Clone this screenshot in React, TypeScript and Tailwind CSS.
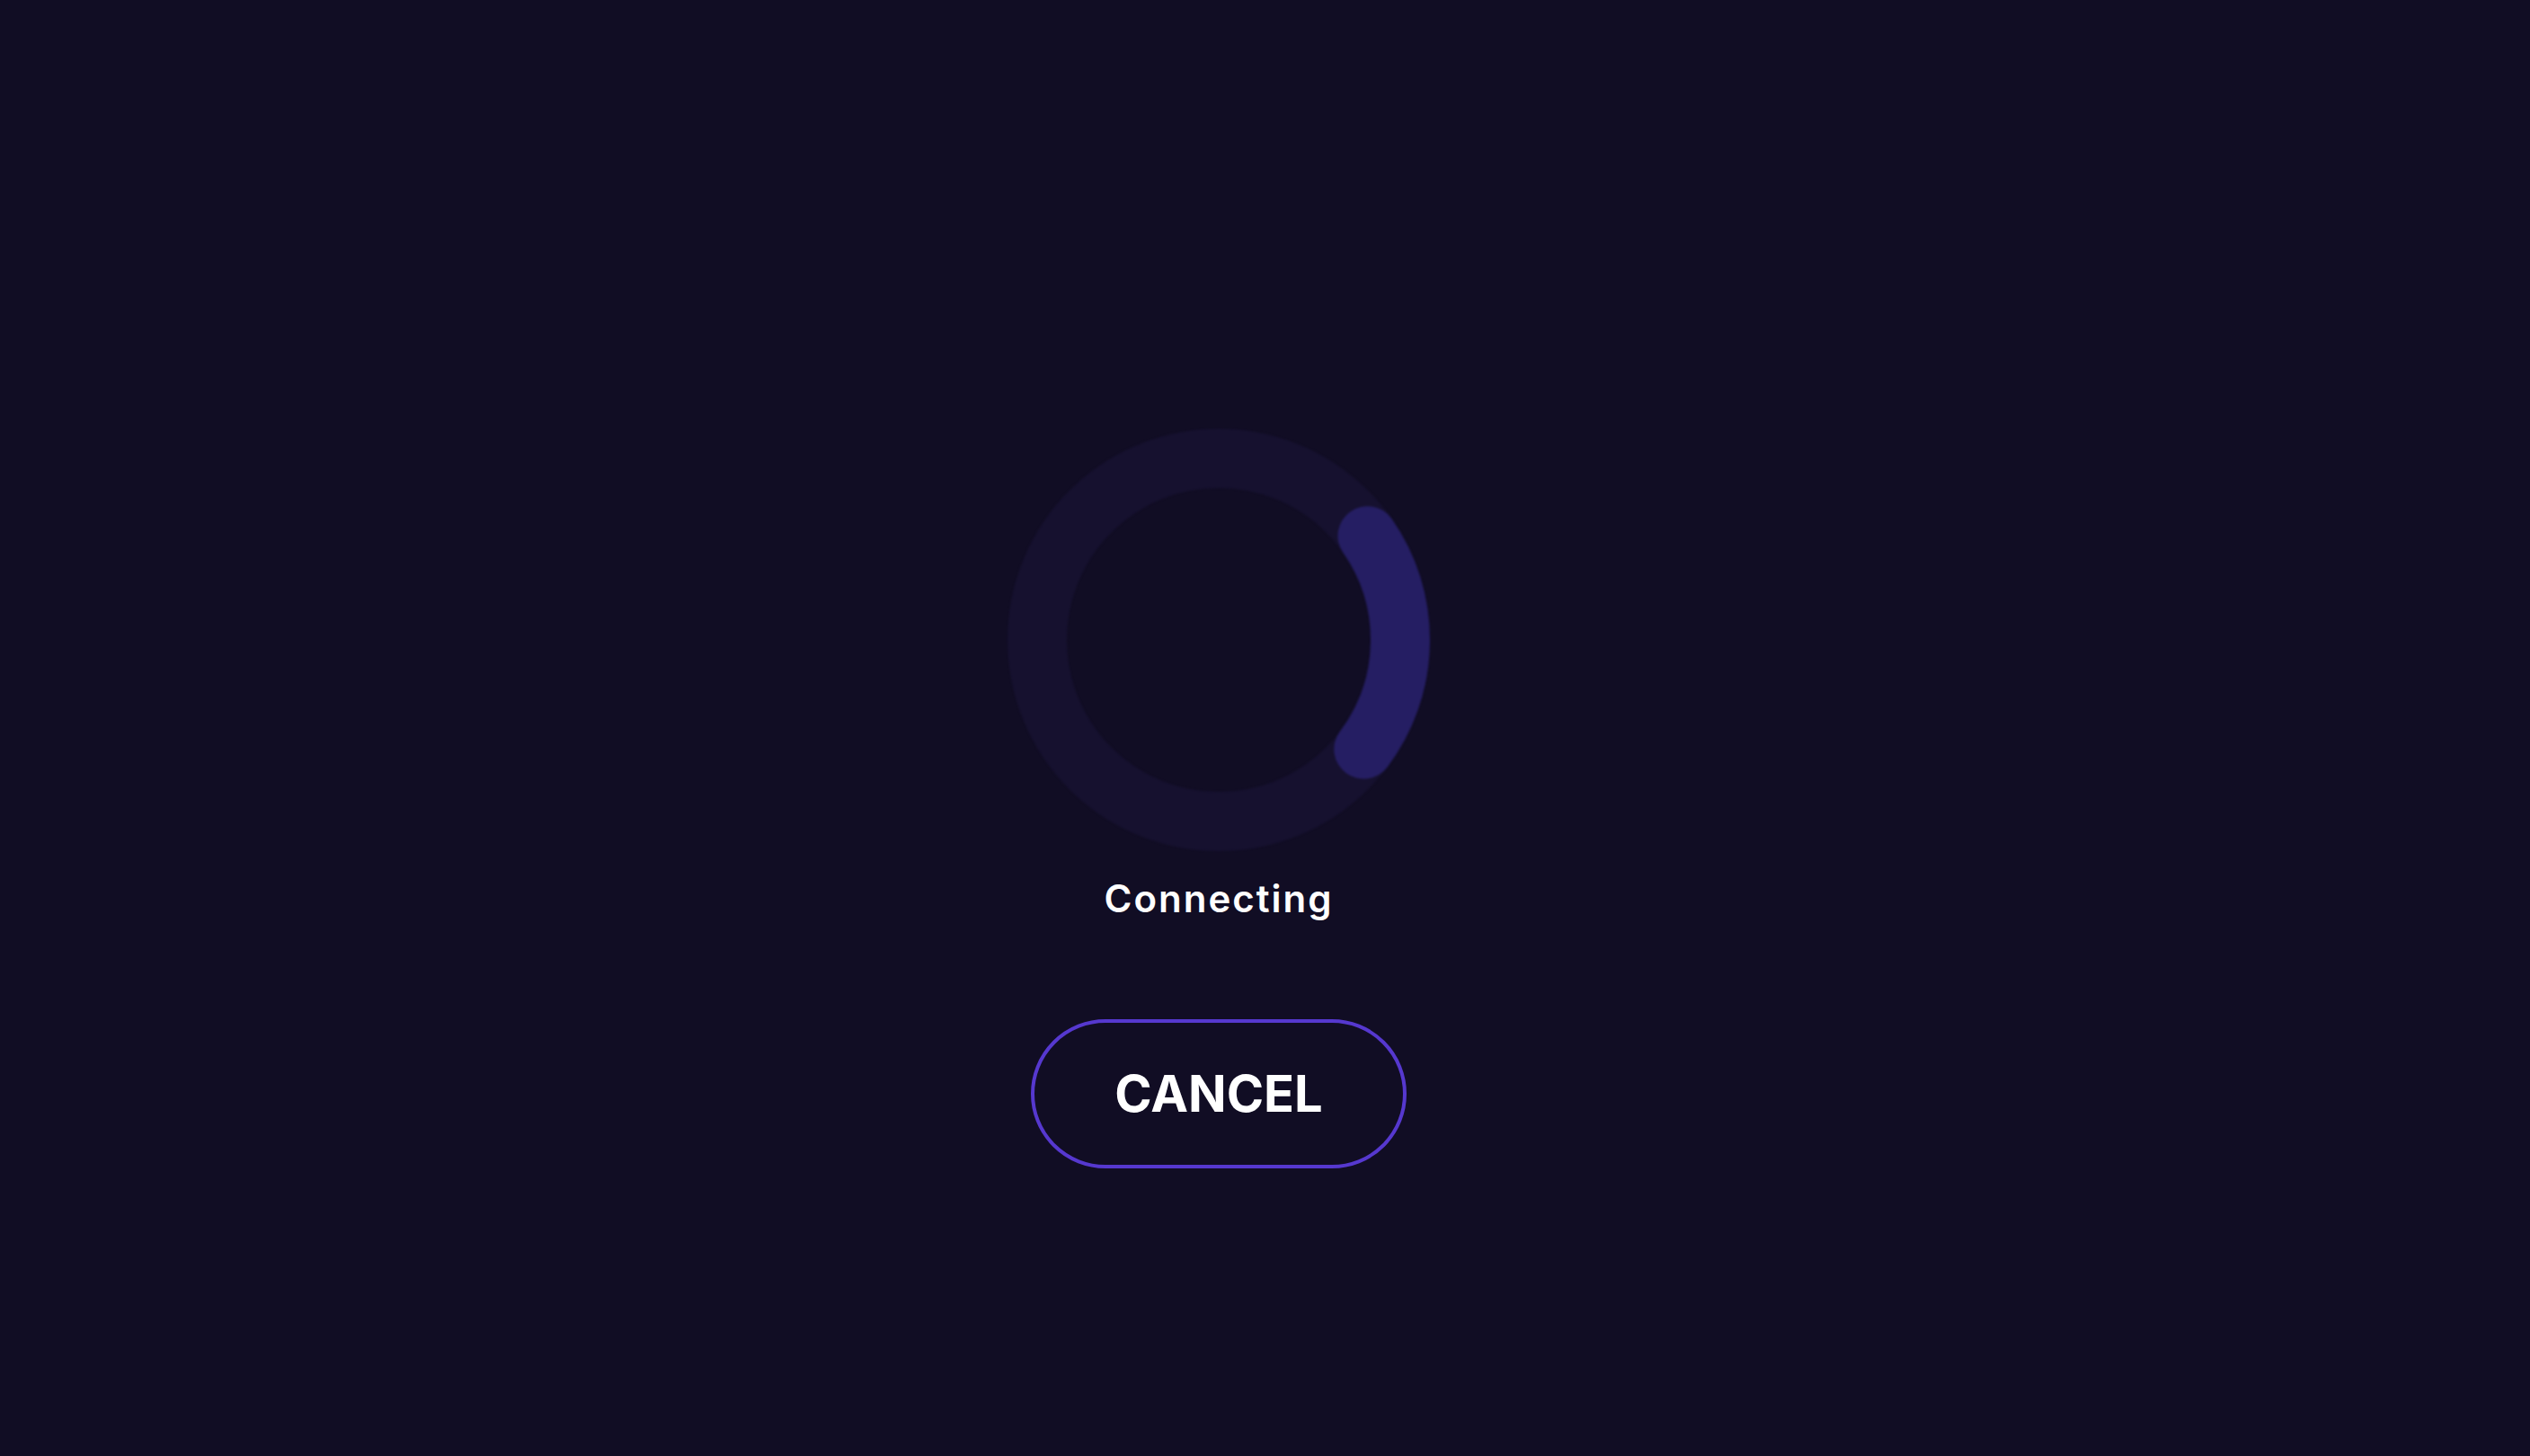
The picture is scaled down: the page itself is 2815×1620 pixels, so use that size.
const Spinner = () => (
  <svg width="470" height="470" viewBox="0 0 470 470" className="blur-[1px]">
    <circle cx="235" cy="235" r="202" fill="none" stroke="#16112f" strokeWidth="66" />
    <path
      d="M 400.5 119.2 A 202 202 0 0 1 396.3 356.6"
      fill="none"
      stroke="#251e63"
      strokeWidth="66"
      strokeLinecap="round"
    />
  </svg>
);

export default function App() {
  return (
    <div
      className="flex h-[1620px] w-full flex-col items-center overflow-hidden bg-[#110d24] pr-[103px] pt-[477px] text-white"
      style={{ fontFamily: 'Inter, "Noto Sans", sans-serif' }}
    >
      <Spinner />
      <div className="mt-[28px] text-[42px] font-semibold leading-[50px] tracking-[2px]">
        Connecting
      </div>
      <button
        type="button"
        className="mt-[109px] flex h-[166px] w-[418px] items-center justify-center rounded-full border-[4px] border-[#5638cf] bg-transparent text-[56px] font-bold text-white"
      >
        CANCEL
      </button>
    </div>
  );
}
